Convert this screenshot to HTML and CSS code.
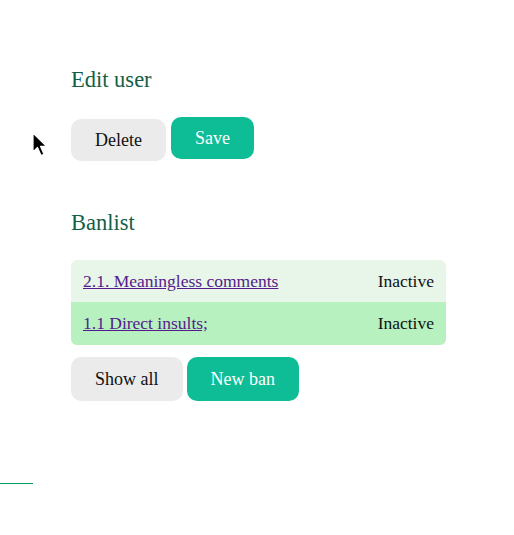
FILE: index.html
```html
<!DOCTYPE html>
<html lang="en">
<head>
<meta charset="utf-8">
<title>Edit user</title>
<link rel="stylesheet" href="styles.css">
</head>
<body>
<main class="page">
  <section class="section">
    <h2 class="title">Edit user</h2>
    <div class="actions actions-top">
      <button class="btn btn-grey btn-delete">Delete</button>
      <button class="btn btn-green">Save</button>
    </div>
  </section>
  <section class="section section-ban">
    <h2 class="title">Banlist</h2>
    <div class="banlist">
      <div class="ban-row ban-row-light">
        <a class="ban-link" href="#">2.1. Meaningless comments</a>
        <span class="ban-status">Inactive</span>
      </div>
      <div class="ban-row ban-row-strong">
        <a class="ban-link" href="#">1.1 Direct insults;</a>
        <span class="ban-status">Inactive</span>
      </div>
    </div>
    <div class="actions actions-bottom">
      <button class="btn btn-grey btn-tall">Show all</button>
      <button class="btn btn-green btn-tall">New ban</button>
    </div>
  </section>
</main>
<div class="bottom-line"></div>
<svg class="cursor" width="16" height="26" viewBox="0 0 16 26" aria-hidden="true">
  <path d="M1 1 L1 20 L5.5 15.5 L9 23.5 L12 22.2 L8.6 14.4 L14.5 14.4 Z" fill="#000" stroke="#fff" stroke-width="1.2" stroke-linejoin="round"/>
</svg>
</body>
</html>
```
FILE: styles.css
```css
html, body {
  margin: 0;
  padding: 0;
  background: #ffffff;
}

body {
  font-family: "Liberation Serif", "Times New Roman", serif;
  color: #111111;
  position: relative;
  min-height: 535px;
}

.page {
  padding: 67px 0 0 71px;
  width: 375px;
}

.title {
  margin: 0;
  font-size: 22.5px;
  line-height: 26px;
  font-weight: normal;
  color: #135e47;
}

.section-ban {
  margin-top: 49px;
}

.actions {
  display: flex;
  align-items: flex-start;
}

.actions-top {
  margin-top: 24px;
  gap: 5px;
}

.actions-bottom {
  margin-top: 12px;
  gap: 4px;
}

.btn {
  font-family: "Liberation Serif", "Times New Roman", serif;
  font-size: 18px;
  line-height: 22px;
  padding: 10px 24px;
  border: none;
  border-radius: 10px;
  cursor: pointer;
}

.btn-tall {
  padding: 11px 24px;
}

.btn-delete {
  margin-top: 2px;
}

.btn-grey {
  background: #ebebeb;
  color: #111111;
}

.btn-green {
  background: #0ebd96;
  color: #ffffff;
}

.banlist {
  margin-top: 24px;
  border-radius: 6px;
  overflow: hidden;
}

.ban-row {
  display: flex;
  justify-content: space-between;
  align-items: center;
  padding: 10px 12px;
  font-size: 17.5px;
  line-height: 22px;
}

.ban-row-light {
  background: #e8f6e9;
}

.ban-row-strong {
  background: #b6f1bf;
  padding-bottom: 11px;
}

.ban-link {
  color: #551a8b;
  text-decoration: underline;
}

.ban-status {
  color: #111111;
}

.bottom-line {
  margin-top: 82px;
  width: 33px;
  height: 1px;
  background: #00995e;
}

.cursor {
  position: absolute;
  left: 32px;
  top: 132px;
}
```
